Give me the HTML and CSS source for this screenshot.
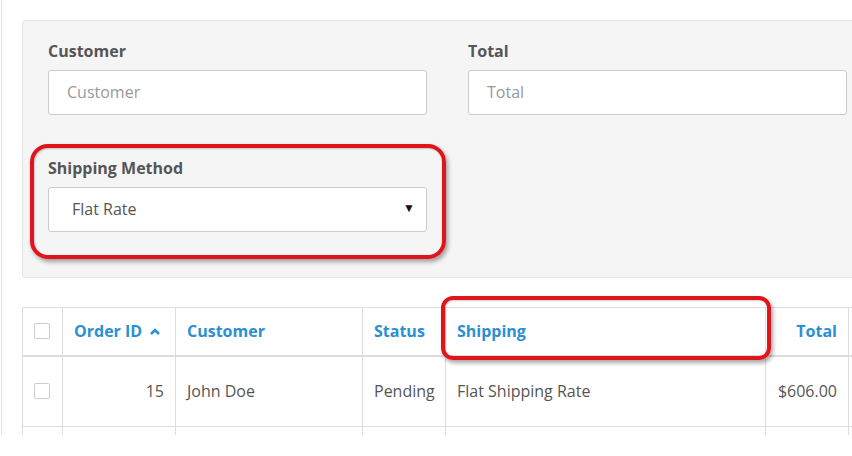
FILE: index.html
```html
<!DOCTYPE html>
<html lang="en">
<head>
  <meta charset="UTF-8" />
  <title>Orders</title>
  <link rel="stylesheet" href="styles.css">
</head>
<body>
  <div class="frame">
    <div class="filter">
      <div class="field">
        <label>Customer</label>
        <div class="input placeholder">Customer</div>
      </div>
      <div class="field">
        <label>Total</label>
        <div class="input placeholder">Total</div>
      </div>
      <div class="field">
        <label>Shipping Method</label>
        <div class="input select">Flat Rate <span class="caret">&#9660;</span></div>
      </div>
    </div>
    <table class="orders">
      <thead>
        <tr>
          <td class="c-check"><span class="box"></span></td>
          <td class="c-id">Order ID
            <svg class="sort" width="12" height="10" viewBox="0 0 12 10"><polyline points="2,8 6,4 10,8" fill="none" stroke="currentColor" stroke-width="2.6"/></svg>
          </td>
          <td class="c-cust">Customer</td>
          <td class="c-status">Status</td>
          <td class="c-ship">Shipping</td>
          <td class="c-total num">Total</td>
          <td class="c-rest"></td>
        </tr>
      </thead>
      <tbody>
        <tr>
          <td class="c-check"><span class="box"></span></td>
          <td class="num">15</td>
          <td>John Doe</td>
          <td>Pending</td>
          <td>Flat Shipping Rate</td>
          <td class="num">$606.00</td>
          <td></td>
        </tr>
        <tr class="cut">
          <td></td><td></td><td></td><td></td><td></td><td></td><td></td>
        </tr>
      </tbody>
    </table>
    <div class="mark mark-select"></div>
    <div class="mark mark-head"></div>
  </div>
</body>
</html>
```

FILE: styles.css
```css
body {
  margin: 0;
  background: #fff;
  font-family: "Open Sans", Arial, sans-serif;
  color: #555;
  overflow: hidden;
}
.frame {
  position: relative;
  height: 435px;
  margin-left: 1px;
  border-left: 1px solid #e3e3e3;
  padding: 20px 0 0 20px;
  box-sizing: border-box;
  overflow: hidden;
}
.filter {
  width: 860px;
  background: #f5f5f5;
  border: 1px solid #e6e6e6;
  border-radius: 3px;
  padding: 20px 0 45px 25px;
  box-sizing: border-box;
  display: grid;
  grid-template-columns: 379px 379px;
  column-gap: 41px;
  row-gap: 43px;
}
.field label {
  display: block;
  font-size: 16px;
  font-weight: 700;
  color: #555;
  line-height: 20px;
  margin-bottom: 9px;
}
.input {
  height: 45px;
  background: #fff;
  border: 1px solid #ccc;
  border-radius: 3px;
  box-sizing: border-box;
  padding: 0 18px;
  font-size: 16px;
  line-height: 43px;
  position: relative;
}
.placeholder {
  color: #999;
}
.select {
  padding-left: 23px;
  color: #555;
}
.caret {
  position: absolute;
  right: 11px;
  top: -2px;
  font-size: 12px;
  color: #111;
}
.orders {
  margin-top: 29px;
  border-collapse: collapse;
  table-layout: fixed;
  width: 900px;
  font-size: 16px;
}
.orders td {
  box-sizing: border-box;
  border: 1px solid #ddd;
  padding: 0 11px;
  white-space: nowrap;
}
.orders thead td {
  height: 48px;
  border-bottom: 2px solid #ddd;
  color: #2b8fd3;
  font-weight: 700;
}
.orders tbody td {
  height: 71px;
}
.orders tbody tr.cut td {
  height: 60px;
}
.c-check { width: 40px; }
.c-id { width: 113px; }
.c-cust { width: 187px; }
.c-status { width: 83px; }
.c-ship { width: 320px; }
.c-total { width: 83px; }
.c-rest { width: 74px; }
.orders td.c-check {
  padding: 0 0 0 11px;
}
.num {
  text-align: right;
}
.sort {
  margin-left: 3px;
  vertical-align: 1px;
}
.box {
  display: block;
  width: 16px;
  height: 16px;
  border: 1px solid #ccc;
  border-radius: 2px;
  background: #fff;
  box-sizing: border-box;
}
.mark {
  position: absolute;
  border: 4px solid #e0141b;
  border-radius: 18px;
  box-shadow: 2px 3px 4px rgba(0,0,0,0.35), inset 1px 1px 2px rgba(0,0,0,0.2);
  box-sizing: border-box;
}
.mark-select {
  left: 28px;
  top: 144px;
  width: 416px;
  height: 115px;
}
.mark-head {
  left: 439px;
  top: 296px;
  width: 330px;
  height: 64px;
  border-radius: 12px;
}
```
